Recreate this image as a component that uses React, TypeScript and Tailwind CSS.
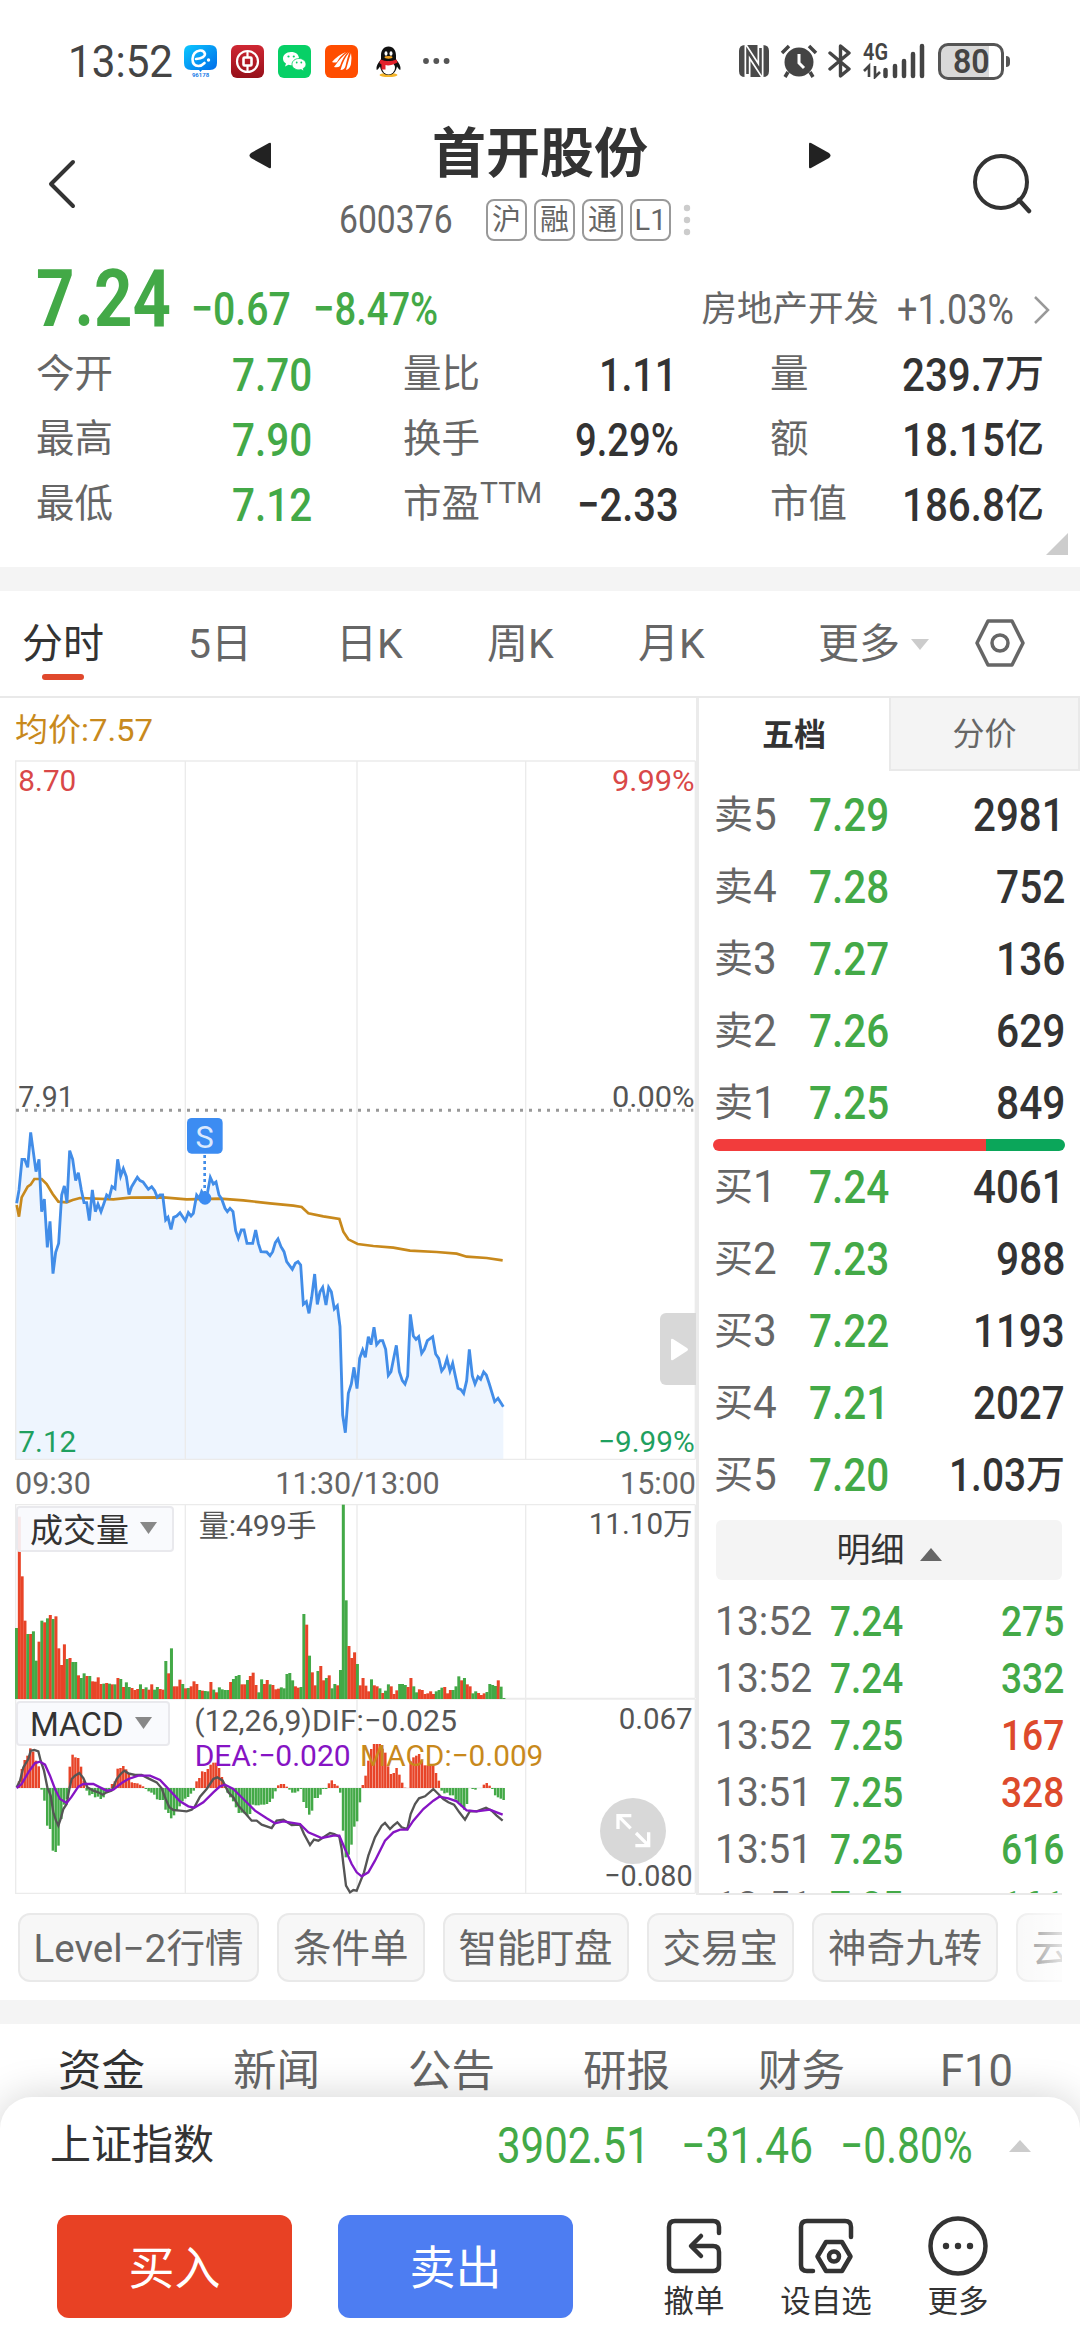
import { type ReactNode, useLayoutEffect, useRef } from "react";

// minute slots of the trading day, in chart units (3 units = 1px)
const SLOT = 8.452;

const PRICE =
  "50,370 57,330 66,238 74,238 83,262 92,157 108,275 117,238 125,395 133,357 142,502 150,424 159,581 167,517 176,490 185,345 193,318 201,368 209,212 218,238 227,302 235,278 244,330 252,368 260,368 268,422 277,330 286,395 294,372 303,395 312,370 320,345 328,352 336,320 345,326 353,238 362,288 370,266 379,290 387,344 395,320 412,292 420,302 429,306 445,328 455,320 464,332 472,352 480,345 488,345 497,420 504,412 513,448 521,412 530,408 540,398 548,410 556,422 565,398 573,408 580,400 590,345 598,355 605,335 614,350 622,340 631,292 640,312 648,306 657,345 665,357 675,385 682,395 690,385 699,395 707,452 715,475 724,450 732,450 741,490 758,490 767,450 775,490 783,515 800,516 810,527 818,515 826,488 834,477 843,500 852,515 860,545 877,568 886,550 894,545 902,555 910,673 919,665 927,700 935,652 944,582 952,673 960,635 968,622 978,675 986,622 994,635 1003,687 1012,677 1020,740 1028,1005 1036,1058 1045,940 1054,912 1062,862 1071,926 1079,835 1088,810 1096,832 1105,770 1113,794 1122,742 1130,794 1140,782 1148,782 1157,808 1165,886 1173,875 1181,835 1189,796 1198,875 1207,902 1215,912 1223,888 1231,703 1240,768 1248,778 1256,770 1265,820 1273,808 1282,782 1298,770 1307,822 1316,835 1325,873 1333,862 1341,836 1350,873 1358,850 1366,888 1374,925 1383,929 1391,940 1400,902 1408,808 1417,888 1425,912 1434,890 1442,898 1451,876 1459,885 1468,912 1484,965 1494,955 1510,980";

const AVERAGE =
  "50,375 57,410 65,352 83,320 92,314 103,297 125,297 140,312 158,342 175,365 200,367 218,360 240,354 340,358 390,353 490,352 560,358 660,356 730,361 810,370 880,377 905,381 925,400 970,409 1018,417 1030,455 1045,478 1073,492 1120,498 1180,503 1230,512 1310,516 1370,521 1400,530 1460,534 1508,541";

const VOLUME =
  "g213 r547 r368 r235 g195 r195 g203 g115 r172 g235 r230 g242 r252 g240 r248 r152 r102 r164 g120 r123 g111 g111 r71 g63 g77 r69 g69 r53 r52 r65 r45 g46 r48 g46 r44 g44 r63 g60 r36 g50 g36 r33 r27 r30 g44 r30 g35 r28 r44 g28 g36 r30 r28 g114 r77 g152 r38 r38 r58 g45 r32 g33 r38 r53 r45 g27 r25 g24 g23 r51 g28 r20 g35 g29 g27 g27 r51 g60 g69 g72 r44 r44 g57 r69 r79 r42 g20 g59 r45 r57 g44 r42 r29 r31 g35 g32 g75 g78 g56 r38 r34 g36 g255 r223 g130 r80 r41 g84 r99 r56 g63 r71 g32 g45 r41 g87 g583 g296 r159 r123 r140 g105 r41 r63 r40 r23 g59 r41 r38 g32 r18 g25 g44 r38 r15 r26 g45 g45 g42 r36 r63 g38 g20 r29 r27 r15 r17 r23 r15 g23 g27 g34 r36 r17 r27 g27 g38 g68 r56 g63 r44 r38 g17 g23 r18 r12 r17 g21 g45 g42 g39 r56 g37 g3";

const MACD = [
  0, 20, 57, 84, 97, 119, 109, 82, 65, -5, -38, -113, -123, -188, -192, -173,
  -93, -50, -33, 64, 100, 92, 90, 64, 22, -8, -22, -18, -28, -26, -33, -28, -12,
  -5, 12, 20, 58, 60, 66, 56, 42, 17, 15, 14, 10, 5, -3, -10, -14, -20, -34,
  -36, -36, -65, -75, -91, -82, -68, -55, -40, -32, -27, -17, -8, 20, 30, 50,
  48, 57, 70, 76, 76, 60, 33, 5, -14, -28, -40, -58, -75, -74, -76, -84, -78,
  -50, -52, -52, -50, -50, -48, -42, -32, -10, 8, 12, 12, 4, -5, -14, -14, -10,
  -3, -42, -60, -80, -68, -30, -30, -20, -3, -3, 14, 23, 12, 7, -14, -128, -208,
  -200, -170, -116, -100, -43, 9, 37, 82, 117, 132, 132, 132, 118, 106, 65, 42,
  45, 60, 40, 16, 1, 0, 80, 92, 97, 102, 82, 68, 68, 68, 68, 45, 22, -8, -16,
  -14, -22, -22, -35, -42, -55, -65, -48, 0, -3, -5, 0, 0, 10, 15, 7, -3, -22,
  -28, -32, -36,
];

const DIF =
  "50,985 60,965 70,925 85,900 92,875 103,873 115,877 122,905 132,935 142,985 152,1010 160,1060 168,1085 175,1100 182,1080 190,1050 200,1035 208,990 215,960 225,950 238,942 250,957 262,985 280,995 295,1000 308,1007 320,1000 335,995 350,960 362,945 373,935 385,943 405,948 425,948 445,958 470,970 485,988 497,1020 508,1045 520,1053 540,1055 560,1057 575,1052 583,1045 600,1013 620,990 640,960 652,955 668,965 685,1000 700,1015 715,1040 735,1062 755,1085 770,1085 785,1097 815,1107 830,1085 850,1082 875,1098 900,1097 912,1125 930,1158 942,1142 955,1145 975,1132 990,1122 1003,1125 1018,1133 1025,1170 1030,1215 1038,1280 1050,1300 1060,1293 1070,1295 1080,1270 1092,1240 1105,1190 1125,1135 1145,1100 1155,1092 1170,1110 1180,1100 1192,1090 1205,1105 1222,1110 1232,1065 1245,1035 1257,1018 1275,1012 1300,990 1315,1005 1330,1020 1345,1030 1362,1037 1378,1060 1395,1082 1410,1056 1430,1057 1458,1046 1475,1055 1490,1070 1508,1085";

const DEA =
  "50,987 65,975 85,940 105,912 120,908 135,917 150,950 165,990 180,1020 200,1032 215,1013 235,983 250,975 280,975 300,985 320,995 340,992 365,972 385,960 415,950 450,950 480,963 510,995 540,1027 565,1042 583,1046 610,1030 640,1000 660,982 675,977 700,990 730,1020 765,1055 800,1078 825,1093 850,1087 900,1095 925,1120 965,1137 1000,1130 1018,1130 1035,1170 1055,1215 1070,1240 1085,1252 1105,1240 1125,1205 1155,1145 1180,1120 1200,1112 1222,1112 1240,1085 1270,1050 1300,1025 1318,1013 1345,1018 1370,1027 1400,1054 1430,1057 1470,1052 1490,1060 1508,1067";

const ASKS = [
  { label: "卖5", price: "7.29", amount: "2981" },
  { label: "卖4", price: "7.28", amount: "752" },
  { label: "卖3", price: "7.27", amount: "136" },
  { label: "卖2", price: "7.26", amount: "629" },
  { label: "卖1", price: "7.25", amount: "849" },
];

const BIDS = [
  { label: "买1", price: "7.24", amount: "4061" },
  { label: "买2", price: "7.23", amount: "988" },
  { label: "买3", price: "7.22", amount: "1193" },
  { label: "买4", price: "7.21", amount: "2027" },
  { label: "买5", price: "7.20", amount: "1.03", unit: "万" },
];

const TICKS = [
  { time: "13:52", price: "7.24", amount: "275", up: false },
  { time: "13:52", price: "7.24", amount: "332", up: false },
  { time: "13:52", price: "7.25", amount: "167", up: true },
  { time: "13:51", price: "7.25", amount: "328", up: true },
  { time: "13:51", price: "7.25", amount: "616", up: false },
  { time: "13:51", price: "7.25", amount: "161", up: false },
];

// Squeezes its text to exactly `w` pixels, for the narrow DIN-like figures
function Fit({
  w,
  className = "",
  children,
}: {
  w: number;
  className?: string;
  children: ReactNode;
}) {
  const ref = useRef<HTMLSpanElement>(null);
  useLayoutEffect(() => {
    const el = ref.current;
    if (el) el.style.transform = `scaleX(${w / el.offsetWidth})`;
  }, [w, children]);
  return (
    <span
      className={`inline-flex shrink-0 leading-none ${className}`}
      style={{ width: w }}>
      <span ref={ref} className="inline-block origin-left whitespace-nowrap">
        {children}
      </span>
    </span>
  );
}

export default function App() {
  return (
    <div className="w-[1080px] h-[2340px] overflow-hidden bg-white text-[#333] leading-none font-['Roboto','Noto_Sans_CJK_SC',sans-serif] flex flex-col">
      <StatusBar />
      <Header />
      <Quote />
      <div className="h-6 shrink-0 bg-[#f4f4f4]" />
      <PeriodTabs />
      <div className="flex h-[1197px] shrink-0">
        <Charts />
        <OrderBook />
      </div>
      <Shortcuts />
      <div className="h-6 shrink-0 bg-[#f4f4f4]" />
      <InfoTabs />
      <BottomSheet />
    </div>
  );
}

function StatusBar() {
  return (
    <div className="flex h-[120px] shrink-0 items-center pl-[68px] pr-[70px] pt-[2px]">
      <Fit w={105} className="text-[45px] text-[#444]">
        13:52
      </Fit>
      <div className="ml-[11px] flex items-center gap-[14px]">
        <svg width="33" height="33" viewBox="0 0 33 33">
          <defs>
            <linearGradient id="sky" x1="0" y1="0" x2="1" y2="1">
              <stop offset="0" stopColor="#0cc8ff" />
              <stop offset="1" stopColor="#0068e8" />
            </linearGradient>
            <linearGradient id="crimson" x1="0" y1="0" x2="0" y2="1">
              <stop offset="0" stopColor="#cf2733" />
              <stop offset="1" stopColor="#96101a" />
            </linearGradient>
          </defs>
          <path d="M7 0h19q7 0 7 7v11q0 7-7 7h-8l-1.500 2-1.500-2H7q-7 0-7-7V7q0-7 7-7z" fill="url(#sky)" />
          <path d="M12 14q9-1 9-5-1-4-5-3.500-7 1-7.500 8.500 0 7 6 7 3 0 6-3" fill="none" stroke="#fff" strokeWidth="2.600" strokeLinecap="round" />
          <circle cx="24.500" cy="15" r="1.700" fill="#fff" />
          <text x="16.500" y="32" fontSize="6" fontWeight="700" textAnchor="middle" fill="#1a7ee8">
            96178
          </text>
        </svg>
        <svg width="33" height="33" viewBox="0 0 33 33">
          <rect width="33" height="33" rx="6" fill="url(#crimson)" />
          <circle cx="16.500" cy="16.500" r="10.500" fill="none" stroke="#fff" strokeWidth="2.200" />
          <path d="M16.500 6v6M16.500 21v6" stroke="#fff" strokeWidth="2.200" />
          <rect x="12.500" y="12.500" width="8" height="8" rx="1" fill="none" stroke="#fff" strokeWidth="2.600" />
        </svg>
        <svg width="33" height="33" viewBox="0 0 33 33">
          <rect width="33" height="33" rx="6" fill="#07d066" />
          <path d="M13 7c-5 0-8 3-8 6.500 0 2 1 4 3 5l-1 3 3.500-1.700 2.500.5c5 0 8-3 8-6.800S18 7 13 7z" fill="#fff" />
          <path d="M21 13.500c-4 0-7 2.600-7 5.700s3 5.700 7 5.700l2-.3 3 1.500-.8-2.600c1.800-1 2.800-2.600 2.800-4.300 0-3.100-3-5.700-7-5.700z" fill="#fff" stroke="#07d066" strokeWidth=".8" />
          <g fill="#07d066">
            <circle cx="10.500" cy="11.500" r="1.100" />
            <circle cx="15.800" cy="11.500" r="1.100" />
            <circle cx="18.700" cy="17.500" r=".9" />
            <circle cx="23.300" cy="17.500" r=".9" />
          </g>
        </svg>
        <svg width="33" height="33" viewBox="0 0 33 33">
          <rect width="33" height="33" rx="6" fill="#ff4d00" />
          <path
            d="M21 7Q13 10 7 17q3 1 5 0 3-6 9-10zM23 7q-7 5-14 15 4 1 6-1 3-9 8-14zM24.500 7q-6 7-9 18 4 0 5-4 2-9 4-14zM26 8q-2 6-5 17 4-1 5-6 1-6 0-11z"
            fill="#fff"
          />
        </svg>
        <svg width="33" height="33" viewBox="0 0 33 33">
          <ellipse cx="16.500" cy="30" rx="9" ry="2" fill="#f5b52a" />
          <path d="M16.500 1.500c-5 0-7.500 4-7.500 9v4c-3 3-5 7-4.500 10 1 1 2-1 3.500-3 1 5 4 8.500 8.500 8.500s7.500-3.500 8.500-8.500c1.500 2 2.500 4 3.500 3 .5-3-1.500-7-4.500-10v-4c0-5-2.500-9-7.500-9z" fill="#111" />
          <ellipse cx="16.500" cy="23" rx="6.500" ry="6.500" fill="#fff" />
          <ellipse cx="14" cy="8.500" rx="1.500" ry="2.300" fill="#fff" />
          <ellipse cx="19" cy="8.500" rx="1.500" ry="2.300" fill="#fff" />
          <ellipse cx="16.500" cy="12.300" rx="4" ry="1.400" fill="#f5a623" />
          <path d="M8.500 14.500q8 3.500 16 0l1 3q-8 4-12 2.500v4.500h-4v-5l-2-1.500z" fill="#e3212b" />
        </svg>
        <svg width="28" height="8" viewBox="0 0 28 8" className="ml-[3px]" fill="#555">
          <circle cx="4" cy="4" r="2.900" />
          <circle cx="14.300" cy="4" r="2.900" />
          <circle cx="24.600" cy="4" r="2.900" />
        </svg>
      </div>
      <div className="ml-auto flex items-center">
        <svg width="30" height="32" viewBox="0 0 30 32">
          <path d="M6 0h18q6 0 6 6v20q0 6-6 6H6q-6 0-6-6V6q0-6 6-6z" fill="#4a4a4a" />
          <path d="M8.500 32V6l13 20V0" fill="none" stroke="#fff" strokeWidth="6" />
          <path d="M8.500 29V6l13 20V3" fill="none" stroke="#4a4a4a" strokeWidth="2.600" />
        </svg>
        <svg width="38" height="34" viewBox="0 0 38 34" className="ml-[11px]">
          <circle cx="19" cy="18" r="14.500" fill="#444" />
          <path d="M19 10v9l5 5" fill="none" stroke="#fff" strokeWidth="3" />
          <path d="M2 9l7-7M36 9l-7-7M8 28l-3 5M30 28l3 5" stroke="#444" strokeWidth="3.500" />
        </svg>
        <svg width="24" height="34" viewBox="0 0 24 34" className="ml-[10px]">
          <path d="M2 9l19 16-8.500 7V2L21 9 2 25" fill="none" stroke="#444" strokeWidth="3.400" strokeLinejoin="round" strokeLinecap="round" />
        </svg>
        <svg width="62" height="40" viewBox="0 -4 62 40" className="-mt-1 ml-[11px]">
          <text x="0" y="17" fontSize="23" fontWeight="600" fill="#444" textLength="25" lengthAdjust="spacingAndGlyphs">
            4G
          </text>
          <path d="M6 34V23l-5 5M12 23v11l5-5" fill="none" stroke="#444" strokeWidth="2.600" />
          <path d="M22.500 33v-6M32 33V23M41 33V18M50 33V11M59 33V3" stroke="#444" strokeWidth="4.500" strokeLinecap="round" />
        </svg>
        <div className="ml-[13px] flex h-[37px] w-[66px] items-center justify-center rounded-[10px] border-[3px] border-[#555] bg-linear-to-r from-[#d9d9d9] from-80% to-white to-80%">
          <Fit w={37} className="text-[33px] font-semibold text-[#444]">
            80
          </Fit>
        </div>
        <div className="ml-[2px] h-[11px] w-1 rounded-r bg-[#555]" />
      </div>
    </div>
  );
}

function Header() {
  return (
    <div className="flex h-[130px] shrink-0 items-start pl-[47px] pr-[48px]">
      <svg width="30" height="50" viewBox="0 0 30 50" className="mt-[39px]">
        <path d="M26 3L4 25l22 22" fill="none" stroke="#333" strokeWidth="4" strokeLinejoin="round" strokeLinecap="round" />
      </svg>
      <div className="ml-[172px] flex w-[582px] flex-col items-center">
        <div className="flex w-full items-center justify-between pt-[3px]">
          <svg width="22" height="27" viewBox="0 0 22 27">
            <path d="M22 2v23q0 2-2 1L2 16q-3-2.500 0-5L20 1q2-1 2 1z" fill="#222" />
          </svg>
          <h1 className="text-[54px] font-bold leading-[64px]">首开股份</h1>
          <svg width="22" height="27" viewBox="0 0 22 27">
            <path d="M0 2v23q0 2 2 1l18-10q3-2.500 0-5L2 1Q0 0 0 2z" fill="#222" />
          </svg>
        </div>
        <div className="mt-[12px] flex w-full items-center pl-[90px]">
          <Fit w={114} className="text-[39px] text-[#666]">
            600376
          </Fit>
          <div className="ml-[33px] flex gap-[7px]">
            {["沪", "融", "通", "L1"].map((tag) => (
              <span
                key={tag}
                className="flex h-[42px] w-[41px] items-center justify-center rounded-lg border-2 border-[#999] text-[29px] text-[#666]">
                {tag}
              </span>
            ))}
          </div>
          <svg width="8" height="32" viewBox="0 0 8 32" className="ml-3" fill="#ccc">
            <circle cx="4" cy="4" r="3.200" />
            <circle cx="4" cy="16" r="3.200" />
            <circle cx="4" cy="28" r="3.200" />
          </svg>
        </div>
      </div>
      <svg width="62" height="62" viewBox="0 0 62 62" className="ml-auto mt-[33px]">
        <circle cx="31" cy="29" r="26" fill="none" stroke="#333" strokeWidth="4" />
        <path d="M49 47l10 11" stroke="#333" strokeWidth="4.500" strokeLinecap="round" />
      </svg>
    </div>
  );
}

function Stat({ label, children }: { label: ReactNode; children: ReactNode }) {
  return (
    <div className="flex h-[65px] items-center justify-between">
      <span className="text-[38.500px] text-[#666]">{label}</span>
      <span className="flex items-center text-[47px] font-medium">
        {children}
      </span>
    </div>
  );
}

function Unit({ children }: { children: ReactNode }) {
  return <span className="text-[39px] font-medium">{children}</span>;
}

function Quote() {
  return (
    <div className="h-[317px] shrink-0 pl-9 pr-9">
      <div className="flex h-[92px] items-end pb-[3px] text-[#43a947]">
        <Fit w={135} className="text-[80px] font-bold">
          7.24
        </Fit>
        <Fit w={100} className="ml-5 mb-[7px] text-[47px] font-medium">
          −0.67
        </Fit>
        <Fit w={125} className="ml-[22px] mb-[7px] text-[47px] font-medium">
          −8.47%
        </Fit>
        <div className="-mr-[3px] mb-[8px] ml-auto flex items-center text-[#666]">
          <span className="text-[35.500px]">房地产开发</span>
          <Fit w={117} className="ml-[18px] text-[43px]">
            +1.03%
          </Fit>
          <svg width="18" height="30" viewBox="0 0 18 30" className="ml-[19px] -mr-1">
            <path d="M2 2l13 13L2 28" fill="none" stroke="#999" strokeWidth="2.500" />
          </svg>
        </div>
      </div>
      <div className="grid grid-cols-[276px_276px_274px] gap-x-[91px]">
        <div className="text-[#43a947]">
          <Stat label="今开">
            <Fit w={80}>7.70</Fit>
          </Stat>
          <Stat label="最高">
            <Fit w={80}>7.90</Fit>
          </Stat>
          <Stat label="最低">
            <Fit w={80}>7.12</Fit>
          </Stat>
        </div>
        <div>
          <Stat label="量比">
            <Fit w={78} className="mr-[2px]">
              1.11
            </Fit>
          </Stat>
          <Stat label="换手">
            <Fit w={104}>9.29%</Fit>
          </Stat>
          <Stat
            label={
              <span className="flex">
                市盈<span className="-mt-[7px] text-[30px]">TTM</span>
              </span>
            }>
            <Fit w={102}>−2.33</Fit>
          </Stat>
        </div>
        <div>
          <Stat label="量">
            <Fit w={103}>239.7</Fit>
            <Unit>万</Unit>
          </Stat>
          <Stat label="额">
            <Fit w={103}>18.15</Fit>
            <Unit>亿</Unit>
          </Stat>
          <Stat label="市值">
            <Fit w={103}>186.8</Fit>
            <Unit>亿</Unit>
          </Stat>
        </div>
      </div>
      <svg width="22" height="22" viewBox="0 0 22 22" className="-mr-6 -mt-[4px] ml-auto">
        <path d="M22 0v22H0z" fill="#ccc" />
      </svg>
    </div>
  );
}

function PeriodTabs() {
  return (
    <div className="flex h-[107px] shrink-0 items-center border-b-2 border-[#e9e9e9] pl-[22px] pr-[55px] pt-[2px] text-[41px] text-[#666]">
      <div className="relative w-[166px] text-[#333]">
        分时
        <i className="absolute -bottom-[15px] left-5 h-[6px] w-[42px] rounded-full bg-[#e0482c]" />
      </div>
      <div className="w-[148px]">5日</div>
      <div className="w-[151px]">日K</div>
      <div className="w-[151px]">周K</div>
      <div>月K</div>
      <div className="ml-auto flex items-center gap-[11px]">
        更多
        <svg width="18" height="11" viewBox="0 0 18 11">
          <path d="M0 0h18L9 11z" fill="#ccc" />
        </svg>
      </div>
      <svg width="50" height="48" viewBox="0 0 50 48" className="-mt-[3px] ml-[46px]">
        <path d="M13 2h24l11 22-11 22H13L2 24z" fill="none" stroke="#666" strokeWidth="3.500" strokeLinejoin="round" />
        <circle cx="25" cy="24" r="8" fill="none" stroke="#666" strokeWidth="3.500" />
      </svg>
    </div>
  );
}

function Grid({ y1, y2 }: { y1: number; y2: number }) {
  return (
    <path
      d={`M47 ${y1}V${y2}M556 ${y1}V${y2}M1071 ${y1}V${y2}M1577 ${y1}V${y2}M2086 ${y1}V${y2}M45 ${y1}H2086M45 ${y2}H2086`}
      fill="none"
      stroke="#ebebeb"
      strokeWidth="4"
    />
  );
}

function Label({
  x,
  y,
  w,
  fill = "#555",
  size = 90,
  children,
}: {
  x: number;
  y: number;
  w: number;
  fill?: string;
  size?: number;
  children: string;
}) {
  return (
    <text x={x} y={y} fontSize={size} fill={fill} textLength={w} lengthAdjust="spacingAndGlyphs">
      {children}
    </text>
  );
}

function Charts() {
  const volume = VOLUME.split(" ");
  return (
    <div className="flex w-[699px] shrink-0 flex-col border-r-[3px] border-[#ebebeb]">
      <div className="flex h-[62px] shrink-0 items-center pl-[15px] pt-[2px] text-[32px] text-[#c8891c]">
        <Fit w={138}>均价:7.57</Fit>
      </div>
      <div className="relative h-[702px] shrink-0">
        <svg width="696" height="702" viewBox="0 -960 2088 2106">
          <polygon points={`48,1138 ${PRICE} 1510,1138`} fill="#eef5fe" />
          <Grid y1={-957} y2={1138} />
          <path d="M48 91H2080" stroke="#999" strokeWidth="9" strokeDasharray="9 18" />
          <polyline points={AVERAGE} fill="none" stroke="#c8891c" strokeWidth="8" />
          <polyline points={PRICE} fill="none" stroke="#428de8" strokeWidth="8.500" />
          <path d="M614 225V340" stroke="#428de8" strokeWidth="8" strokeDasharray="9 9" />
          <circle cx="615" cy="355" r="19" fill="#3c8cf2" />
          <rect x="561" y="114" width="107" height="107" rx="14" fill="#3c8cf2" />
          <text x="614" y="204" fontSize="92" fill="#dbe9fd" textAnchor="middle">
            S
          </text>
          <Label x={55} y={-868} w={174} fill="#d94848">8.70</Label>
          <Label x={1836} y={-868} w={248} fill="#d94848">9.99%</Label>
          <Label x={55} y={80} w={166}>7.91</Label>
          <Label x={1836} y={80} w={248}>0.00%</Label>
          <Label x={55} y={1116} w={174} fill="#1fa05f">7.12</Label>
          <Label x={1794} y={1116} w={290} fill="#1fa05f">−9.99%</Label>
        </svg>
        <button
          type="button"
          className="absolute right-0 top-[553px] flex h-[72px] w-9 items-center rounded-l-md bg-[#d8d8d8] pl-[11px]">
          <svg width="17" height="23" viewBox="0 0 17 23">
            <path d="M0 2Q0 0 2 1l14 9q2 1.500 0 3L2 22q-2 1-2-1z" fill="#fff" />
          </svg>
        </button>
      </div>
      <div className="flex h-[42px] shrink-0 items-center justify-between pl-[15px] pt-[2px] text-[30.500px] text-[#666]">
        <span>09:30</span>
        <span className="ml-1">11:30/13:00</span>
        <span>15:00</span>
      </div>
      <div className="relative h-[195px] shrink-0">
        <svg width="696" height="195" viewBox="0 135 2088 585">
          <Grid y1={137} y2={718} />
          {volume.map((bar, i) => (
            <rect
              key={i}
              x={45 + i * SLOT}
              y={720 - Number(bar.slice(1))}
              width={SLOT + 0.6}
              height={Number(bar.slice(1))}
              fill={bar[0] === "r" ? "#e84428" : "#43a947"}
            />
          ))}
          <Label x={596} y={230} w={354}>量:499手</Label>
          <Label x={1766} y={226} w={312}>11.10万</Label>
        </svg>
        <div className="absolute left-4 top-[2px] flex h-[46px] w-[158px] items-center gap-[11px] rounded border-2 border-[#e9e9ed] bg-[#f8f9fd]/90 pl-[12px] pt-[2px] text-[33px]">
          成交量
          <svg width="17" height="12" viewBox="0 0 17 12" className="-mt-1">
            <path d="M0 0h17L8.500 12z" fill="#888" />
          </svg>
        </div>
      </div>
      <div className="relative h-[195px] shrink-0">
        <svg width="696" height="195" viewBox="0 720 2088 585">
          <Grid y1={720} y2={1303} />
          <path d="M45 987H1510" stroke="#ebebeb" strokeWidth="3" />
          {MACD.map((v, i) => (
            <rect
              key={i}
              x={45 + i * SLOT}
              y={v > 0 ? 987 - v : 987}
              width={SLOT - 1}
              height={Math.abs(v)}
              fill={v > 0 ? "#e84428" : "#43a947"}
            />
          ))}
          <polyline points={DIF} fill="none" stroke="#555" strokeWidth="7" />
          <polyline points={DEA} fill="none" stroke="#8614c4" strokeWidth="7" />
          <Label x={583} y={816} w={788}>(12,26,9)DIF:−0.025</Label>
          <Label x={584} y={921} w={468} fill="#8614c4">DEA:−0.020</Label>
          <Label x={1080} y={921} w={550} fill="#c8891c">MACD:−0.009</Label>
          <Label x={1856} y={809} w={222}>0.067</Label>
          <circle cx="1899" cy="1116" r="99" fill="#d8d8d8" />
          <path
            d="M1892 1108l-38-38M1854 1110v-40h40M1908 1122l38 38M1946 1120v40h-40"
            fill="none"
            stroke="#fff"
            strokeWidth="10"
          />
          <Label x={1812} y={1281} w={266}>−0.080</Label>
        </svg>
        <div className="absolute left-4 top-[2px] flex h-[45px] w-[154px] items-center gap-[11px] rounded border-2 border-[#e9e9ed] bg-[#f8f9fd]/90 pl-[12px] pt-[2px] text-[33px]">
          <Fit w={94}>MACD</Fit>
          <svg width="17" height="12" viewBox="0 0 17 12" className="-mt-1">
            <path d="M0 0h17L8.500 12z" fill="#888" />
          </svg>
        </div>
      </div>
    </div>
  );
}

function BookRow({
  label,
  price,
  amount,
  unit,
}: {
  label: string;
  price: string;
  amount: string;
  unit?: string;
}) {
  const width = unit ? 77 : amount.length * 23;
  return (
    <div className="flex h-[72px] items-center pl-[15px] pr-[15px] text-[46px] font-medium">
      <span className="flex w-[95px] items-center text-[39px] font-normal text-[#666]">
        {label[0]}
        <Fit w={24} className="text-[44px]">
          {label[1]}
        </Fit>
      </span>
      <Fit w={80} className="text-[#43a947]">
        {price}
      </Fit>
      <span className="ml-auto flex items-center">
        <Fit w={width}>{amount}</Fit>
        {unit && <Unit>{unit}</Unit>}
      </span>
    </div>
  );
}

function OrderBook() {
  return (
    <div className="flex min-w-0 flex-1 flex-col">
      <div className="flex h-[73px] shrink-0 text-[32px]">
        <div className="flex w-[190px] items-center justify-center font-bold">
          五档
        </div>
        <div className="flex flex-1 items-center justify-center border-2 border-t-0 border-[#e9e9e9] bg-[#f4f4f4] text-[#666]">
          分价
        </div>
      </div>
      <div className="pt-[8px]">
        {ASKS.map((row) => (
          <BookRow key={row.label} {...row} />
        ))}
      </div>
      <div className="ml-[14px] flex h-3 w-[352px] shrink-0 overflow-hidden rounded-full">
        <div className="w-[273px] bg-[#f23c3c]" />
        <div className="flex-1 bg-[#0ba65a]" />
      </div>
      <div>
        {BIDS.map((row) => (
          <BookRow key={row.label} {...row} />
        ))}
      </div>
      <div className="ml-[17px] mr-[18px] mt-[9px] flex h-[60px] shrink-0 items-center justify-center gap-[15px] rounded-md bg-[#f4f4f4] text-[34px]">
        明细
        <svg width="22" height="13" viewBox="0 0 22 13" className="mt-2">
          <path d="M0 13h22L11 0z" fill="#666" />
        </svg>
      </div>
      <div className="mt-[13px] flex-1 overflow-hidden pl-4 pr-4">
        {TICKS.map((tick, i) => (
          <div
            key={i}
            className="flex h-[57px] items-center text-[43px] font-medium text-[#43a947]">
            <Fit w={97} className="text-[41px] font-normal text-[#666]">
              {tick.time}
            </Fit>
            <Fit w={73} className="ml-[18px]">
              {tick.price}
            </Fit>
            <Fit w={63} className={tick.up ? "ml-auto text-[#dd4a2c]" : "ml-auto"}>
              {tick.amount}
            </Fit>
          </div>
        ))}
      </div>
      <div className="mr-[18px] h-[2px] shrink-0 bg-[#e9e9e9]" />
    </div>
  );
}

function Shortcuts() {
  const chips = ["条件单", "智能盯盘", "交易宝", "神奇九转", "云参数"];
  return (
    <div className="relative mr-[18px] flex h-[105px] shrink-0 items-center gap-[18px] overflow-hidden pl-[18px] text-[38.500px] text-[#666]">
      <span className="flex h-[69px] w-[241px] shrink-0 items-center justify-center rounded-xl border-2 border-[#e9e9e9] bg-[#f7f7f7] pt-1">
        <Fit w={133}>Level−2</Fit>
        行情
      </span>
      {chips.map((chip) => (
        <span
          key={chip}
          className="flex h-[69px] shrink-0 items-center rounded-xl border-2 border-[#e9e9e9] bg-[#f7f7f7] px-[14px] pt-1">
          {chip}
        </span>
      ))}
      <div className="absolute right-0 top-0 h-full w-16 bg-linear-to-r from-white/0 to-white/80" />
    </div>
  );
}

function InfoTabs() {
  return (
    <div className="relative flex h-[73px] shrink-0 pl-[14px] text-[43.500px] text-[#666]">
      {["资金", "新闻", "公告", "研报", "财务", "F10"].map((tab, i) => (
        <div
          key={tab}
          className={`flex h-[95px] w-[175px] shrink-0 items-center justify-center${
            i === 0 ? " text-[#333]" : ""
          }`}>
          {tab}
        </div>
      ))}
    </div>
  );
}

function BottomSheet() {
  return (
    <div className="relative h-[243px] shrink-0 rounded-t-[32px] bg-white shadow-[0_0_40px_rgba(0,0,0,0.18)]">
      <div className="flex h-24 items-center pl-[50px] pr-[49px] pt-[1px] text-[50px] text-[#43a947]">
        <span className="text-[41px] text-[#333]">上证指数</span>
        <Fit w={153} className="ml-auto">
          3902.51
        </Fit>
        <Fit w={132} className="ml-[31px]">
          −31.46
        </Fit>
        <Fit w={133} className="ml-[27px]">
          −0.80%
        </Fit>
        <svg width="22" height="12" viewBox="0 0 22 12" className="ml-[36px]">
          <path d="M0 12h22L11 0z" fill="#ccc" />
        </svg>
      </div>
      <div className="flex pl-[57px] pt-[22px]">
        <button
          type="button"
          className="flex h-[103px] w-[235px] items-center justify-center rounded-xl bg-[#e84124] pt-[2px] text-[46px] text-white">
          买入
        </button>
        <button
          type="button"
          className="ml-[46px] flex h-[103px] w-[235px] items-center justify-center rounded-xl bg-[#4d7df2] pt-[2px] text-[46px] text-white">
          卖出
        </button>
        <div className="ml-[76px] flex text-[30.500px]">
          <div className="flex w-[90px] flex-col items-center">
            <svg width="60" height="62" viewBox="0 0 60 62" fill="none" stroke="#333" strokeWidth="4.500">
              <path d="M55 18v-6q0-6-6-6H11q-6 0-6 6v38q0 6 6 6h38q6 0 6-6V37q0-6-6-6H29" strokeLinecap="round" strokeLinejoin="round" />
              <path d="M37 21L27 31l10 10" strokeLinecap="round" strokeLinejoin="round" />
            </svg>
            <span className="mt-[10px]">撤单</span>
          </div>
          <div className="ml-[32px] flex w-[110px] flex-col items-center">
            <svg width="60" height="62" viewBox="0 0 60 62" fill="none" stroke="#333" strokeWidth="4.500">
              <path d="M55 22V12q0-6-6-6H11q-6 0-6 6v38q0 6 6 6h6" strokeLinecap="round" />
              <path d="M30 27h16l8.500 14.500L46 56H30l-8.500-14.500z" strokeLinejoin="round" />
              <circle cx="38" cy="41.500" r="5" />
            </svg>
            <span className="mt-[10px]">设自选</span>
          </div>
          <div className="ml-[32px] flex w-[90px] flex-col items-center">
            <svg width="60" height="62" viewBox="0 0 60 62">
              <circle cx="30" cy="31" r="27.500" fill="none" stroke="#333" strokeWidth="4.500" />
              <circle cx="18" cy="31" r="3.200" fill="#333" />
              <circle cx="30" cy="31" r="3.200" fill="#333" />
              <circle cx="42" cy="31" r="3.200" fill="#333" />
            </svg>
            <span className="mt-[10px]">更多</span>
          </div>
        </div>
      </div>
    </div>
  );
}
